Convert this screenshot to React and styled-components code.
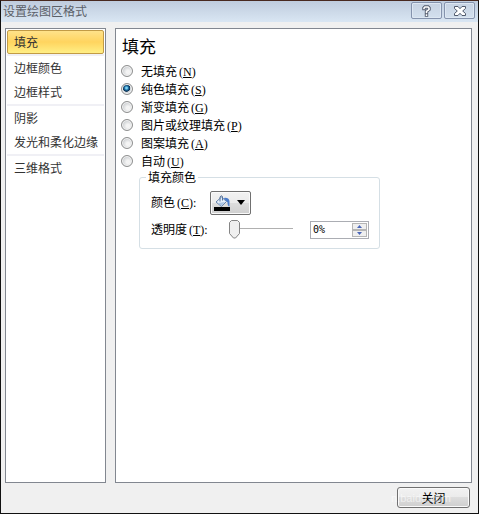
import React, { useState } from 'react';
import styled, { createGlobalStyle } from 'styled-components';

const GlobalStyle = createGlobalStyle`
  * {
    box-sizing: border-box;
  }

  body {
    margin: 0;
    font-family: 'Noto Sans CJK SC', sans-serif;
    font-size: 12px;
    line-height: 18px;
    color: #000;
  }

  button, input {
    font: inherit;
    color: inherit;
  }
`;

const Dialog = styled.div`
  min-height: 100vh;
  display: flex;
  flex-direction: column;
  background: #f0f0f0;
  border: 1px solid #111;
  border-top: 1px solid #48291f;
`;

const TitleBar = styled.header`
  height: 21px;
  padding: 0 3px 2px 2px;
  display: flex;
  align-items: center;
  background: linear-gradient(#bfccdd, #d9e6f3);
`;

const Title = styled.h1`
  flex: 1;
  margin: 0;
  font-size: 12px;
  font-weight: 400;
  color: #5b6068;
`;

const CaptionButton = styled.button`
  width: 31px;
  height: 17px;
  margin-left: 2px;
  padding: 0;
  display: flex;
  align-items: center;
  justify-content: center;
  border: 1px solid #8593ad;
  border-radius: 2px;
  background: linear-gradient(#c6d2e2, #d3e0ee);
  box-shadow: inset 0 0 0 1px #dde7f2;
`;

const Body = styled.div`
  flex: 1;
  display: flex;
  gap: 9px;
  padding: 6px 6px 0 4px;
`;

const Nav = styled.nav`
  width: 101px;
  padding: 1px;
  background: #fff;
  border: 1px solid #828790;
`;

const NavGroup = styled.div`
  & + & {
    border-top: 2px solid #f0f0f5;
  }
`;

const NavItem = styled.button`
  width: 100%;
  height: 24px;
  padding: 0 6px;
  display: flex;
  align-items: center;
  white-space: nowrap;
  border: 1px solid ${({ $active }) => ($active ? '#c29b45' : 'transparent')};
  border-radius: 2px;
  background: ${({ $active }) =>
    $active ? 'linear-gradient(#ffe28a, #ffd45f 50%, #ffef85)' : 'none'};
  color: #333;
`;

const Panel = styled.main`
  flex: 1;
  padding: 5px;
  background: #fff;
  border: 1px solid #828790;
`;

const Heading = styled.h2`
  margin: 0;
  padding: 0 1px 4px;
  font-size: 17px;
  font-weight: 400;
  line-height: 24px;
`;

const Option = styled.label`
  width: fit-content;
  height: 18px;
  display: flex;
  align-items: center;
  gap: 8px;
`;

const Radio = styled.input`
  appearance: none;
  width: 12px;
  height: 12px;
  margin: 0;
  border: 1px solid #8e8f8f;
  border-radius: 50%;
  background: radial-gradient(circle at 60% 60%, #f4f4f4 20%, #c9cccf 70%);
  box-shadow: inset 0 0 0 1px #f4f4f4;

  &:checked {
    background: radial-gradient(circle at 45% 40%, #7fd4f2 0 10%, #1c6fa6 25%, #0b2c4c 42%, #d5dade 50%);
  }
`;

const Key = styled.span`
  padding-left: 2px;
  font-family: 'Liberation Serif', serif;
`;

const Group = styled.fieldset`
  width: 241px;
  min-width: 0;
  margin: 0 0 0 18px;
  padding: 5px 10px 5px 11px;
  border: 1px solid #d5dfe5;
  border-radius: 3px;
`;

const Legend = styled.legend`
  margin-left: -5px;
  padding: 0 2px;
  line-height: 14px;
`;

const Field = styled.div`
  display: flex;
  align-items: center;
  height: 27px;
`;

const FieldLabel = styled.label`
  width: ${({ $wide }) => ($wide ? '78px' : '59px')};
`;

const ColorButton = styled.button`
  width: 41px;
  height: 24px;
  padding: 0 5px 0 3px;
  display: flex;
  align-items: center;
  justify-content: space-between;
  border: 1px solid #707070;
  border-radius: 2px;
  background: linear-gradient(#f2f2f2, #ebebeb 50%, #dddddd 50%, #cfcfcf);
  box-shadow: inset 0 0 0 1px #fafafa;
`;

const thumb = encodeURIComponent(
  '<svg xmlns="http://www.w3.org/2000/svg" width="11" height="19"><path d="M2.5.5h6l2 2v11l-4 4.500h-2l-4-4.500v-11z" fill="#f0f0f0" stroke="#858585"/></svg>'
);

const Slider = styled.input`
  appearance: none;
  width: 64px;
  height: 19px;
  margin: 0;
  background: linear-gradient(#b0b0b0, #b0b0b0) 0 8px / 100% 1px no-repeat;

  &::-webkit-slider-thumb {
    appearance: none;
    width: 11px;
    height: 19px;
    background: url('data:image/svg+xml,${thumb}') no-repeat;
  }
`;

const Spinner = styled.div`
  width: 59px;
  height: 18px;
  margin-left: 17px;
  display: flex;
  border: 1px solid #abadb3;
`;

const SpinnerInput = styled.input`
  flex: 1;
  min-width: 0;
  padding: 0 0 0 2px;
  border: none;
  outline: none;
  background: none;
  font-family: 'DejaVu Sans Mono', monospace;
  font-size: 10px;
`;

const Steps = styled.div`
  width: 15px;
  display: flex;
  flex-direction: column;
  margin: 1px 1px 1px 0;
`;

const Step = styled.button`
  flex: 1;
  min-height: 0;
  padding: 0;
  display: flex;
  align-items: center;
  justify-content: center;
  border: 1px solid #b5b5b5;
  background: #efefef;
`;

const Footer = styled.footer`
  position: relative;
  display: flex;
  justify-content: flex-end;
  padding: 4px 8px 5px;
`;

const CloseButton = styled.button`
  width: 73px;
  height: 21px;
  padding: 0;
  border: 1px solid #707070;
  border-radius: 3px;
  background: linear-gradient(#f2f2f2, #ebebeb 50%, #dddddd 50%, #cfcfcf);
  box-shadow: inset 0 0 0 1px #fafafa;
`;

const Watermark = styled.span`
  position: absolute;
  right: 27px;
  bottom: 6px;
  font-family: 'Liberation Sans', sans-serif;
  font-size: 11px;
  color: rgba(255, 255, 255, 0.6);
  pointer-events: none;
`;

const navGroups = [
  ['填充'],
  ['边框颜色', '边框样式'],
  ['阴影', '发光和柔化边缘'],
  ['三维格式'],
];

const fillOptions = [
  { label: '无填充', key: 'N' },
  { label: '纯色填充', key: 'S' },
  { label: '渐变填充', key: 'G' },
  { label: '图片或纹理填充', key: 'P' },
  { label: '图案填充', key: 'A' },
  { label: '自动', key: 'U' },
];

const HelpIcon = () => (
  <svg width="9" height="12" viewBox="0 0 9 12" fill="none" strokeLinecap="square">
    <path d="M2 3.500V3L3 2h3l1 1v1.500L4.500 6.500V7.500M4.500 10v.1" stroke="#50596b" strokeWidth="3.400" />
    <path d="M2 3.500V3L3 2h3l1 1v1.500L4.500 6.500V7.500M4.500 10v.1" stroke="#fff" strokeWidth="1.600" />
  </svg>
);

const CloseIcon = () => (
  <svg width="12" height="10" viewBox="0 0 12 10" fill="none">
    <path
      d="M.5.5H4L6 2.700 8 .5h3.500v2L8.700 5l2.800 2.500v2H8L6 7.300 4 9.500H.5v-2L3.300 5 .5 2.500z"
      fill="#fff"
      stroke="#50596b"
    />
  </svg>
);

const BucketIcon = () => (
  <svg width="16" height="16" viewBox="0 0 16 16">
    <path d="M2 7L7.500 2l5 4.500L7.500 11.500z" fill="#e4eefa" stroke="#6784ab" />
    <path d="M4 8l7-1-3.500 4z" fill="#a9c3e4" />
    <path d="M6 6.500V2Q7-.3 8.500 1.500v4" fill="none" stroke="#57749c" />
    <path d="M9.500 3q5-1 6 3v5.500q-2 0-2-4L10.500 4z" fill="#4a7ccb" />
    <path d="M0 12h16v4H0z" fill="#000" />
  </svg>
);

function App() {
  const [section, setSection] = useState('填充');
  const [fill, setFill] = useState('S');
  const [transparency, setTransparency] = useState(0);

  const change = (value) => {
    setTransparency(Math.min(100, Math.max(0, Number(value) || 0)));
  };

  return (
    <>
      <GlobalStyle />
      <Dialog role='dialog' aria-labelledby='title'>
        <TitleBar>
          <Title id='title'>设置绘图区格式</Title>
          <CaptionButton aria-label='帮助'>
            <HelpIcon />
          </CaptionButton>
          <CaptionButton aria-label='关闭'>
            <CloseIcon />
          </CaptionButton>
        </TitleBar>
        <Body>
          <Nav>
            {navGroups.map((items) => (
              <NavGroup key={items[0]}>
                {items.map((item) => (
                  <NavItem
                    key={item}
                    $active={item === section}
                    onClick={() => setSection(item)}
                  >
                    {item}
                  </NavItem>
                ))}
              </NavGroup>
            ))}
          </Nav>
          <Panel>
            <Heading>填充</Heading>
            {fillOptions.map(({ label, key }) => (
              <Option key={key}>
                <Radio
                  type='radio'
                  name='fill'
                  checked={fill === key}
                  onChange={() => setFill(key)}
                />
                <span>
                  {label}
                  <Key>
                    (<u>{key}</u>)
                  </Key>
                </span>
              </Option>
            ))}
            <Group>
              <Legend>填充颜色</Legend>
              <Field>
                <FieldLabel htmlFor='color'>
                  颜色
                  <Key>
                    (<u>C</u>):
                  </Key>
                </FieldLabel>
                <ColorButton id='color'>
                  <BucketIcon />
                  <svg width='8' height='5' viewBox='0 0 8 5'>
                    <path d='M0 0h8L4 5z' />
                  </svg>
                </ColorButton>
              </Field>
              <Field>
                <FieldLabel htmlFor='transparency' $wide>
                  透明度
                  <Key>
                    (<u>T</u>):
                  </Key>
                </FieldLabel>
                <Slider
                  id='transparency'
                  type='range'
                  value={transparency}
                  onChange={(e) => change(e.target.value)}
                />
                <Spinner>
                  <SpinnerInput
                    aria-label='透明度'
                    value={`${transparency}%`}
                    onChange={(e) => change(e.target.value.replace('%', ''))}
                  />
                  <Steps>
                    <Step aria-label='增加' onClick={() => change(transparency + 1)}>
                      <svg width='5' height='3' viewBox='0 0 5 3'>
                        <path d='M0 3h5L2.500 0z' fill='#4a66b8' />
                      </svg>
                    </Step>
                    <Step aria-label='减少' onClick={() => change(transparency - 1)}>
                      <svg width='5' height='3' viewBox='0 0 5 3'>
                        <path d='M0 0h5L2.500 3z' fill='#4a66b8' />
                      </svg>
                    </Step>
                  </Steps>
                </Spinner>
              </Field>
            </Group>
          </Panel>
        </Body>
        <Footer>
          <CloseButton>关闭</CloseButton>
          <Watermark aria-hidden='true'>n.baidu.com</Watermark>
        </Footer>
      </Dialog>
    </>
  );
}

export default App;
